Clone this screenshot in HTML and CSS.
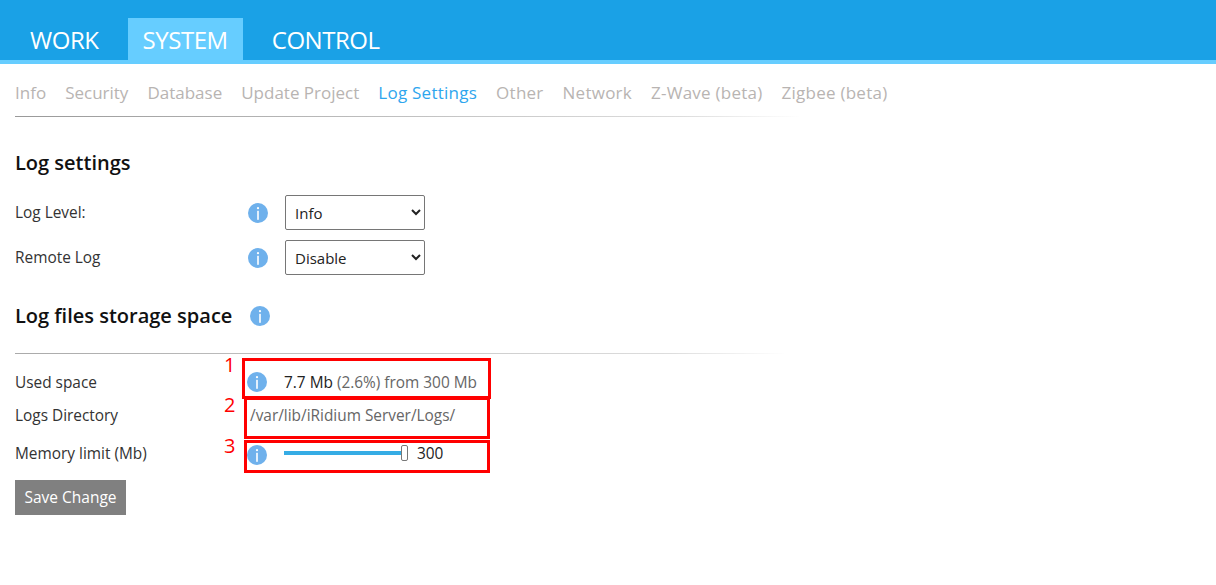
FILE: index.html

```html
<!DOCTYPE html>
<html lang="en">
<head>
    <meta charset="UTF-8">
    <title>Log Settings</title>
    <link rel="stylesheet" href="styles.css">
</head>
<body>
    <svg class="icon-defs" width="0" height="0">
        <symbol id="info" viewBox="0 0 20 20">
            <circle cx="10" cy="10" r="10" fill="#6fb1ec"/>
            <circle cx="10" cy="5.2" r="1.1" fill="#fff"/>
            <rect x="9.2" y="7.8" width="1.6" height="9" fill="#fff"/>
        </symbol>
    </svg>

    <div class="header">
        <a class="tab">WORK</a>
        <a class="tab active">SYSTEM</a>
        <a class="tab">CONTROL</a>
    </div>

    <div class="content">
        <div class="subnav">
            <a>Info</a>
            <a>Security</a>
            <a>Database</a>
            <a>Update Project</a>
            <a class="active">Log Settings</a>
            <a>Other</a>
            <a>Network</a>
            <a>Z-Wave (beta)</a>
            <a>Zigbee (beta)</a>
        </div>

        <h2 class="title-first">Log settings</h2>
        <div class="form-row select-row">
            <label>Log Level:</label>
            <svg class="info"><use href="#info"/></svg>
            <select><option>Info</option></select>
        </div>
        <div class="form-row select-row">
            <label>Remote Log</label>
            <svg class="info"><use href="#info"/></svg>
            <select><option>Disable</option></select>
        </div>

        <div class="title-line">
            <h2>Log files storage space</h2>
            <svg class="info"><use href="#info"/></svg>
        </div>

        <div class="form-row used-row">
            <label>Used space</label>
            <svg class="info"><use href="#info"/></svg>
            <span class="used"><b>7.7 Mb</b> (2.6%) from 300 Mb</span>
        </div>
        <div class="form-row dir-row">
            <label>Logs Directory</label>
            <span class="path">/var/lib/iRidium Server/Logs/</span>
        </div>
        <div class="form-row limit-row">
            <label>Memory limit (Mb)</label>
            <svg class="info"><use href="#info"/></svg>
            <span class="slider"><span class="thumb"></span></span>
            <span class="limit-value">300</span>
        </div>

        <button type="button">Save Change</button>
    </div>

    <!-- red markers drawn over the screenshot -->
    <div class="mark mark-1"></div>
    <div class="mark mark-2"></div>
    <div class="mark mark-3"></div>
    <span class="num num-1">1</span>
    <span class="num num-2">2</span>
    <span class="num num-3">3</span>
</body>
</html>
```

FILE: styles.css

```css
* {
    box-sizing: border-box;
}
body {
    margin: 0;
    background: #fff;
    font-family: "Open Sans", "Noto Sans", sans-serif;
    color: #333;
}
.icon-defs {
    position: absolute;
}
.header {
    height: 64px;
    padding: 18px 0 0 15px;
    display: flex;
    background: #1aa1e6;
    border-bottom: 4px solid #66cdff;
}
.tab {
    height: 42px;
    padding: 0 15px;
    margin-right: 14px;
    line-height: 44px;
    font-size: 24px;
    letter-spacing: -0.45px;
    color: #fff;
}
.tab.active {
    background: #66cdff;
}
.content {
    padding: 0 15px;
}
.subnav {
    width: 785px;
    height: 53px;
    display: flex;
    gap: 19px;
    padding-top: 16px;
    font-size: 17px;
    line-height: 26px;
    white-space: nowrap;
    color: #b8b4b2;
    border-bottom: 1px solid;
    border-image: linear-gradient(to right, #999, #ddd 85%, #fff) 1;
}
.subnav a:nth-child(n+5) {
    letter-spacing: 0.25px;
}
.subnav .active {
    color: #2ea6ee;
}
h2 {
    margin: 0;
    font-size: 20px;
    font-weight: 600;
    color: #111;
}
.title-first {
    margin-top: 32px;
    margin-bottom: 18px;
    line-height: 28px;
}
.form-row {
    display: flex;
    align-items: center;
    font-size: 15.4px;
}
.form-row label {
    width: 233px;
    flex: none;
}
.info {
    width: 20px;
    height: 20px;
    flex: none;
}
.select-row {
    height: 35px;
    margin-bottom: 10px;
}
.select-row select {
    width: 140px;
    height: 35px;
    margin-left: 17px;
    padding-left: 5px;
    font-family: inherit;
    font-size: 15px;
    color: #222;
    background: #fff;
    border: 1px solid #767676;
    border-radius: 2px;
}
.title-line {
    width: 770px;
    height: 65px;
    display: flex;
    align-items: flex-start;
    gap: 18px;
    margin-top: 14px;
    padding-top: 13px;
    border-bottom: 1px solid;
    border-image: linear-gradient(to right, #aaa, #ddd 85%, #fff) 1;
}
.title-line h2 {
    line-height: 28px;
}
.title-line .info {
    margin-top: 4px;
}
.used-row {
    height: 28px;
    margin-top: 14px;
}
.used-row .info,
.limit-row .info {
    margin-left: -1px;
}
.used {
    margin-left: 17px;
    color: #666;
}
.used b {
    font-weight: 400;
    color: #222;
}
.dir-row {
    height: 30px;
    margin-top: 4px;
}
.path {
    margin-left: 2px;
    color: #666;
}
.limit-row {
    height: 28px;
    margin-top: 9px;
}
.limit-row .info {
    margin-top: 4px;
}
.slider {
    position: relative;
    width: 118px;
    height: 4px;
    margin-left: 17px;
    background: #35ace5;
}
.thumb {
    position: absolute;
    right: -6px;
    top: -6px;
    width: 7px;
    height: 16px;
    background: #fff;
    border: 1px solid #777;
    border-radius: 2px;
}
.limit-value {
    margin-left: 15px;
    color: #222;
}
button {
    display: block;
    width: 111px;
    height: 35px;
    margin-top: 13px;
    padding: 0 0 2px;
    border: none;
    font-family: inherit;
    font-size: 15.5px;
    color: #fff;
    background: #808080;
}
.mark {
    position: absolute;
    border: 3px solid #f00;
}
.mark-1 {
    left: 242px;
    top: 358px;
    width: 249px;
    height: 41px;
}
.mark-2 {
    left: 244px;
    top: 397px;
    width: 246px;
    height: 42px;
}
.mark-3 {
    left: 244px;
    top: 440px;
    width: 246px;
    height: 33px;
}
.num {
    position: absolute;
    left: 224px;
    font-size: 20px;
    line-height: 24px;
    color: #f00;
}
.num-1 {
    top: 353px;
}
.num-2 {
    top: 393px;
}
.num-3 {
    top: 434px;
}
```
